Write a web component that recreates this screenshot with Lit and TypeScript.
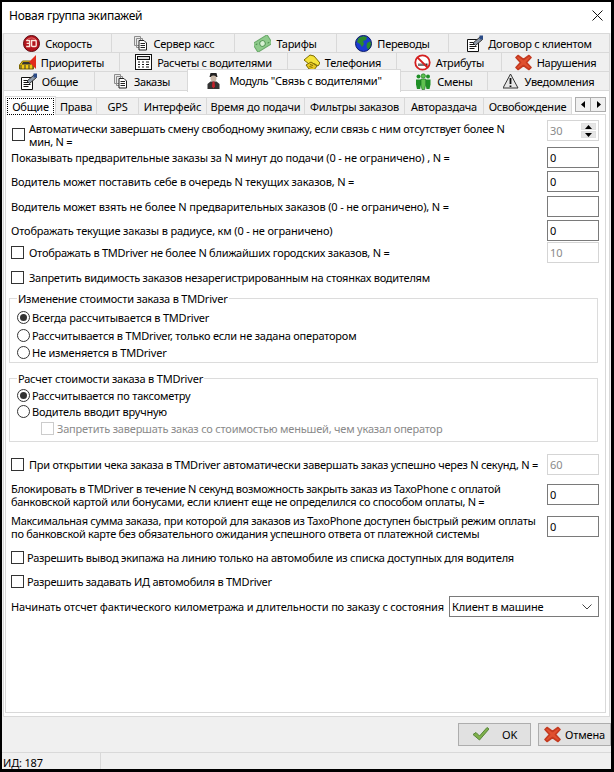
import { LitElement, html, css, svg } from "lit";
import { customElement } from "lit/decorators.js";

const icons: Record<string, any> = {
  speed: svg`<circle cx="8.500" cy="8.500" r="8" fill="#b3141c"/><circle cx="8.500" cy="8.500" r="8" fill="none" stroke="#5e0a10"/><path d="M3 6a6.500 6.500 0 0 1 11 0" fill="none" stroke="#e8767a"/><path d="M3.200 5.500h3.400v6H3.200M3.600 8.400h2.600M8.600 5.500h3.600a1 1 0 0 1 1 1v4a1 1 0 0 1-1 1H9.600a1 1 0 0 1-1-1z" fill="none" stroke="#fbe6dc" stroke-width="1.400"/>`,
  docs: svg`<path d="M2.500 1.500h6v9h-6zM4.500 3.500h6v9h-6z" fill="#e9e9e9" stroke="#8c8c8c"/><path d="M7 5.500h5l2.500 2.500v7H7z" fill="#fff" stroke="#222"/><path d="M8.500 8.500h4.500M8.500 10.500h4.500M8.500 12.500h4.500" stroke="#222"/>`,
  money: svg`<g transform="rotate(-32 8.500 8.500)"><rect x="0" y="3.500" width="17" height="10" fill="#8fcb8c" stroke="#6aa96a"/><circle cx="8.500" cy="8.500" r="2.800" fill="#d7f0d3" stroke="#5a9a5c"/><path d="M2 6h2M13 11h2" stroke="#4f9150"/></g>`,
  globe: svg`<circle cx="8.500" cy="8.500" r="8" fill="#1b3bd0"/><path d="M3.500 3C6 1 10 .5 12 2l-1 3-3 1 1 3-2 3-2-3-3-2zM12 8l3.500-2 1 4-3 5-2-3z" fill="#2c8a2c"/><circle cx="8.500" cy="8.500" r="8" fill="none" stroke="#0a1a66"/>`,
  contract: svg`<path d="M1.500 4.500h11v12h-11z" fill="#fff" stroke="#111"/><path d="M3.500 7.500h7M3.500 9.500h7M3.500 11.500h7M3.500 13.500h5" stroke="#111"/><path d="M7 8l7-6 2.500 2.500-7 6z" fill="#8f9aa8" stroke="#333"/><rect x="13.500" y="0.500" width="3.500" height="4" fill="#2a4a86"/>`,
  taxi: svg`<path d="M0.500 15v-4l3-4h8l3 3v5z" fill="#f2c912" stroke="#7c6500"/><path d="M4 8h6.500l2 2.500h-10z" fill="#333"/><path d="M1 12h13M1 14h13" stroke="#333" stroke-dasharray="2 2"/><path d="M10 8l7-7v14z" fill="#e12b1b"/>`,
  calc: svg`<rect x="0.500" y="0.500" width="16" height="15" fill="#fff" stroke="#111"/><rect x="2.500" y="2.500" width="12" height="3" fill="#ddd" stroke="#111"/><path d="M3 8h2M7 8h2M11 8h3M3 10.500h2M7 10.500h2M11 10.500h3M3 13h2M7 13h2M11 13h3" stroke="#111" stroke-width="1.200"/>`,
  phone: svg`<path d="M1 6l6-5 4 1 6 7-2 3-3-2-4-1-2 1z" fill="#f5e33a" stroke="#7d6b00"/><path d="M3 11l5-3 6 4-3 4-5-1z" fill="#e8c820" stroke="#7d6b00"/><path d="M7 10.500l3 1M6.500 12.500l3 1" stroke="#7d6b00"/>`,
  nosmoke: svg`<circle cx="8.500" cy="8.500" r="7.200" fill="#fff" stroke="#d41f1f" stroke-width="1.800"/><path d="M4 9.500h8v2.500H4z" fill="#777"/><path d="M12 9.500h1.500v2.500H12z" fill="#333"/><path d="M3.500 3.500l10 10" stroke="#d41f1f" stroke-width="1.800"/>`,
  xred: svg`<path d="M3 1.500L8.500 5.500 14 1.500 16 3.500 11.500 8.500 16 13.500 14 15.500 8.500 11.500 3 15.500 1 13.500 5.500 8.500 1 3.500z" fill="#e0502f" stroke="#c43a20" stroke-linejoin="round" stroke-width="1.600"/>`,
  drv: svg`<path d="M3.500 5h8l-1-4h-6z" fill="#222"/><circle cx="7.500" cy="6.500" r="3" fill="#c9b8a8"/><path d="M1.500 17v-5l3-2.500h6l3 2.500v5z" fill="#333"/><path d="M6.500 9.500h2l.5 5-1.500 2-1.500-2z" fill="#c2202a"/>`,
  people: svg`<g fill="#1f8f26"><circle cx="3.500" cy="3.500" r="2"/><path d="M1 6.500h5v5l-.8 4.500H2l-1-4.500z"/><circle cx="13" cy="3.500" r="2"/><path d="M10.500 6.500h5v5l-1 4.500h-3l-1-4.500z"/></g><g fill="#5fc24f" stroke="#0f6a18" stroke-width=".6"><circle cx="8.300" cy="3" r="2.200"/><path d="M6 6h4.600v6l-1 4.500h-2.600l-1-4.500z"/></g>`,
  warn: svg`<path d="M7.500 1L15 15H0z" fill="#e6e6e6" stroke="#333"/><path d="M7.500 5v6M7.500 12.500v1.500" stroke="#111" stroke-width="1.800"/>`,
  check: svg`<path d="M1 8.500l3-2 3.500 3.500L15 1.500l2 1.500-9.500 11z" fill="#7fb04a" stroke="#56853a" stroke-linejoin="round"/>`,
};
const ic = (n: string) =>
  html`<svg class="ic" width="17" height="17" viewBox="0 0 17 17">${icons[n]}</svg>`;

const rows = [
  { cls: "r1", tabs: [["speed", "Скорость"], ["docs", "Сервер касс"], ["money", "Тарифы"], ["globe", "Переводы"], ["contract", "Договор с клиентом"]] },
  { cls: "r2", tabs: [["taxi", "Приоритеты"], ["calc", "Расчеты с водителями"], ["phone", "Телефония"], ["nosmoke", "Атрибуты"], ["xred", "Нарушения"]] },
  { cls: "r3", tabs: [["contract", "Общие"], ["docs", "Заказы"], ["drv", 'Модуль "Связь с водителями"'], ["people", "Смены"], ["warn", "Уведомления"]] },
];
const inner = ["Общие", "Права", "GPS", "Интерфейс", "Время до подачи", "Фильтры заказов", "Автораздача", "Освобождение"];

@customElement("app-root")
export class AppRoot extends LitElement {
  static styles = css`
    :host { display: block; width: 614px; height: 772px; box-sizing: border-box; background: #000; padding: 2px 3px 3px 2px; font: 11px/13px "Noto Sans", Tahoma, sans-serif; letter-spacing: -0.17px; color: #000; overflow: hidden; }
    * { box-sizing: border-box; }
    .win { height: 767px; background: #f0f0f0; display: flex; flex-direction: column; }
    .title { height: 31px; background: #fff; display: flex; align-items: center; justify-content: space-between; padding: 0 8px 5px 7px; font-size: 12px; letter-spacing: -0.25px; }
    .title svg { display: block; }
    .tabs { margin-left: 1px; width: 607px; display: flex; flex-direction: column; letter-spacing: -0.28px; }
    .trow { display: grid; height: 19px; }
    .r1 { grid-template-columns: 108px 123px 102px 112px 161px; }
    .r2 { grid-template-columns: 116px 168px 109px 105px 108px; }
    .r3 { grid-template-columns: 91px 93px 213px 87px 122px; }
    .tab { display: flex; align-items: center; justify-content: center; gap: 5px; border: 1px solid #d9d9d9; margin-right: -1px; margin-bottom: -1px; height: 20px; background: #f0f0f0; white-space: nowrap; position: relative; }
    .tab.on { background: #fff; height: 23px; margin-top: -2px; z-index: 2; border-bottom: 0; padding-bottom: 2px; gap: 6px; }
    .ic { flex: none; display: block; }
    .outer { margin-left: 1px; width: 607px; height: 627px; background: #fff; border: 1px solid #d9d9d9; padding: 6px 3px 3px 1px; display: flex; flex-direction: column; }
    .itabs { display: flex; height: 17px; position: relative; letter-spacing: -0.2px; }
    .itab { border: 1px solid #d9d9d9; margin-right: -1px; height: 18px; background: #f0f0f0; display: flex; align-items: center; justify-content: center; white-space: nowrap; }
    .itab.on { background: #fff; height: 19px; margin-top: -1px; border-bottom: 0; z-index: 2; position: relative; }
    .focus { outline: 1px dotted #000; padding: 1px 4px 1px; line-height: 13px; }
    .w0 { width: 51px; } .w1 { width: 42px; } .w2 { width: 43px; } .w3 { width: 69px; } .w4 { width: 99px; } .w5 { width: 101px; } .w6 { width: 80px; } .w7 { width: 89px; }
    .arrows { margin-left: 4px; display: flex; height: 15px; }
    .arrows div { width: 16px; height: 15px; background: #f0f0f0; border: 1px solid #adadad; margin-right: -1px; display: flex; align-items: center; justify-content: center; }
    .panel { flex: 1; border: 1px solid #d9d9d9; padding: 5px 6px 0 5px; display: flex; flex-direction: column; background: #fff; }
    .row { display: flex; align-items: center; justify-content: space-between; height: 21px; flex: none; white-space: nowrap; }
    .row.top { align-items: flex-start; }
    .lbl { display: flex; align-items: center; white-space: nowrap; height: 21px; }
    .lbl.narrow { letter-spacing: -0.25px; }
    .cb { width: 13px; height: 13px; border: 1px solid #333; background: #fff; flex: none; display: block; margin-right: 5px; }
    .cb.off { border-color: #ccc; }
    .cb.tight { margin-right: 3px; }
    .long { display: flex; align-items: flex-start; padding-top: 2px; letter-spacing: -0.25px; }
    .long .cb { margin: 6px 4px 0 1px; }
    .para { letter-spacing: -0.29px; }
    .input { width: 52px; height: 21px; border: 1px solid #7a7a7a; background: #fff; padding: 0 0 0 2px; display: flex; align-items: center; flex: none; letter-spacing: 0; }
    .input.dis { border-color: #d5d5d5; color: #8a8a8a; }
    .spin { justify-content: space-between; padding-right: 2px; }
    .sp { display: flex; flex-direction: column; gap: 1px; }
    .sp div { width: 15px; height: 7px; background: #e6e6e6; border: 1px solid #e0e0e0; display: flex; align-items: center; justify-content: center; }
    .group { border: 1px solid #dcdcdc; margin-left: -2px; width: 589px; position: relative; display: flex; flex-direction: column; flex: none; padding-left: 7px; letter-spacing: -0.2px; }
    .legend { position: absolute; left: 7px; top: -7px; background: #fff; padding: 0 1px; }
    .opt { display: flex; align-items: center; height: 17.5px; white-space: nowrap; }
    .rd { width: 13px; height: 13px; border: 1px solid #333; border-radius: 50%; background: #fff; margin-right: 2px; flex: none; display: flex; align-items: center; justify-content: center; }
    .rd.on::after { content: ""; width: 7px; height: 7px; border-radius: 50%; background: #333; }
    .dis-t { color: #8a8a8a; }
    .sub { padding-left: 24px; }
    .sub .cb { margin-right: 3px; }
    .select { width: 150px; height: 21px; border: 1px solid #7a7a7a; display: flex; align-items: center; justify-content: space-between; padding: 0 6px 0 2px; flex: none; }
    .g1 { margin-top: 10px; height: 65px; padding-top: 10px; }
    .g2 { margin-top: 15px; height: 64px; padding-top: 8px; }
    .g2 .o1 { height: 17px; } .g2 .o2 { height: 15px; } .g2 .o3 { height: 18px; }
    .h24 { height: 24px; } .h25 { height: 25px; } .h22 { height: 22px; } .h27 { height: 27px; }
    .mt12 { margin-top: 12px; } .mt9 { margin-top: 9px; } .mt11 { margin-top: 11px; } .mt10 { margin-top: 10px; } .mt3 { margin-top: 3px; } .mt4 { margin-top: 4px; }
    .foot { flex: none; height: 35px; display: flex; justify-content: flex-end; gap: 7px; padding: 6px 0 0; }
    .btn { width: 73px; height: 23px; background: #e1e1e1; border: 1px solid #adadad; display: flex; align-items: center; justify-content: center; gap: 13px; }
    .btn.x { gap: 4px; }
    .status { flex: none; height: 17px; border-top: 1px solid #d9d9d9; display: flex; align-items: center; }
    .status div { width: 99px; height: 16px; border-right: 1px solid #d9d9d9; padding-left: 1px; line-height: 20px; }
  `;

  private cb(text: string, tight = false) {
    return html`<span class="lbl narrow"><span class="cb ${tight ? "tight" : ""}"></span>${text}</span>`;
  }

  render() {
    return html`<div class="win">
      <div class="title"><span>Новая группа экипажей</span>
        <svg width="11" height="11" viewBox="0 0 11 11"><path d="M.5.5l10 10M10.500.5l-10 10" stroke="#111"/></svg></div>
      <div class="tabs">
        ${rows.map((r, ri) => html`<div class="trow ${r.cls}">${r.tabs.map((t, i) =>
          html`<div class="tab ${ri === 2 && i === 2 ? "on" : ""}">${ic(t[0])}<span>${t[1]}</span></div>`)}</div>`)}
      </div>
      <div class="outer">
        <div class="itabs">
          ${inner.map((t, i) => html`<div class="itab w${i} ${i === 0 ? "on" : ""}">${i === 0 ? html`<span class="focus">${t}</span>` : t}</div>`)}
          <div class="arrows">
            <div><svg width="5" height="7" viewBox="0 0 5 7"><path d="M4 0v7L0 3.500z"/></svg></div>
            <div><svg width="5" height="7" viewBox="0 0 5 7"><path d="M1 0v7l4-3.500z"/></svg></div>
          </div>
        </div>
        <div class="panel">
          <div class="row top h27">
            <div class="long"><span class="cb"></span><span>Автоматически завершать смену свободному экипажу, если связь с ним отсутствует более N<br>мин, N =</span></div>
            <div class="input dis spin">30<div class="sp"><div><svg width="7" height="4" viewBox="0 0 7 4"><path d="M0 4h7L3.500 0z"/></svg></div><div><svg width="7" height="4" viewBox="0 0 7 4"><path d="M0 0h7L3.500 4z"/></svg></div></div></div>
          </div>
          <div class="row h24 top"><span class="lbl">Показывать предварительные заказы за N минут до подачи (0 - не ограничено) , N =</span><div class="input">0</div></div>
          <div class="row h25 top"><span class="lbl">Водитель может поставить себе в очередь N текущих заказов, N =</span><div class="input">0</div></div>
          <div class="row h24 top"><span class="lbl">Водитель может взять не более N предварительных заказов (0 - не ограничено), N =</span><div class="input"></div></div>
          <div class="row h22 top"><span class="lbl">Отображать текущие заказы в радиусе, км (0 - не ограничено)</span><div class="input">0</div></div>
          <div class="row h24 top">${this.cb("Отображать в TMDriver не более N ближайших городских заказов, N =")}<div class="input dis">10</div></div>
          <div class="row h22">${this.cb("Запретить видимость заказов незарегистрированным на стоянках водителям")}</div>
          <div class="group g1"><span class="legend">Изменение стоимости заказа в TMDriver</span>
            <div class="opt"><span class="rd on"></span>Всегда рассчитывается в TMDriver</div>
            <div class="opt"><span class="rd"></span>Рассчитывается в TMDriver, только если не задана оператором</div>
            <div class="opt"><span class="rd"></span>Не изменяется в TMDriver</div>
          </div>
          <div class="group g2"><span class="legend">Расчет стоимости заказа в TMDriver</span>
            <div class="opt o1"><span class="rd on"></span>Рассчитывается по таксометру</div>
            <div class="opt o2"><span class="rd"></span>Водитель вводит вручную</div>
            <div class="opt o3 sub"><span class="cb off"></span><span class="dis-t">Запретить завершать заказ со стоимостью меньшей, чем указал оператор</span></div>
          </div>
          <div class="row mt12">${this.cb("При открытии чека заказа в TMDriver автоматически завершать заказ успешно через N секунд, N =")}<div class="input dis">60</div></div>
          <div class="row mt9"><span class="para">Блокировать в TMDriver в течение N секунд возможность закрыть заказ из TaxoPhone с оплатой<br>банковской картой или бонусами, если клиент еще не определился со способом оплаты, N =</span><div class="input">0</div></div>
          <div class="row mt11"><span class="para">Максимальная сумма заказа, при которой для заказов из TaxoPhone доступен быстрый режим оплаты<br>по банковской карте без обязательного ожидания успешного ответа от платежной системы</span><div class="input">0</div></div>
          <div class="row mt10">${this.cb("Разрешить вывод экипажа на линию только на автомобиле из списка доступных для водителя", true)}</div>
          <div class="row mt3">${this.cb("Разрешить задавать ИД автомобиля в TMDriver", true)}</div>
          <div class="row mt4"><span>Начинать отсчет фактического километража и длительности по заказу с состояния</span>
            <div class="select"><span>Клиент в машине</span><svg width="10" height="6" viewBox="0 0 10 6"><path d="M.5.500L5 5 9.500.500" fill="none" stroke="#444"/></svg></div></div>
        </div>
      </div>
      <div class="foot">
        <div class="btn">${ic("check")}<span>OK</span></div>
        <div class="btn x">${ic("xred")}<span>Отмена</span></div>
      </div>
      <div class="status"><div>ИД: 187</div></div>
    </div>`;
  }
}
